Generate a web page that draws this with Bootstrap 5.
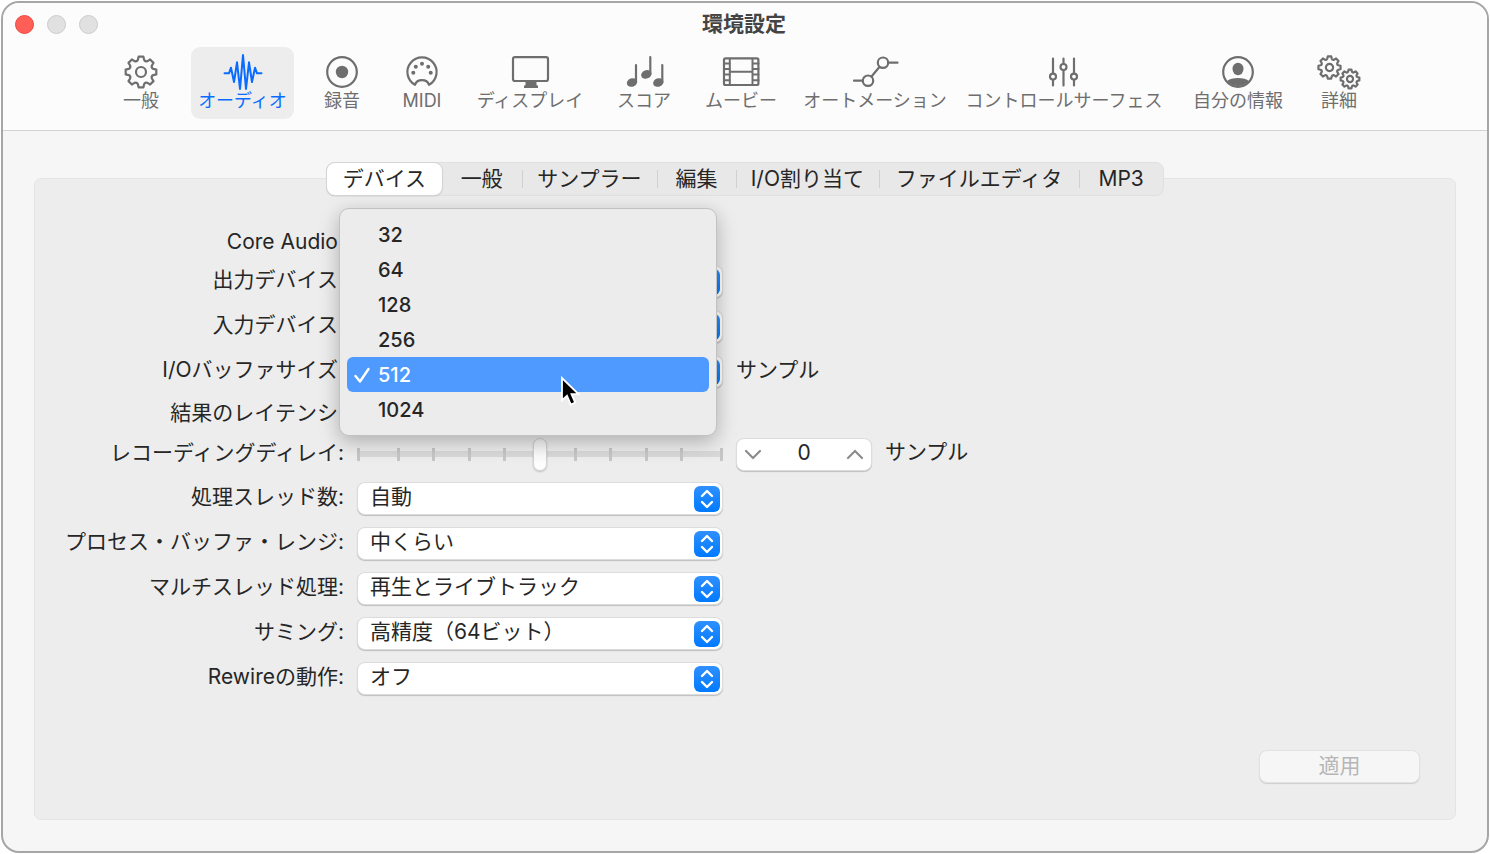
<!DOCTYPE html>
<html lang="ja">
<head>
<meta charset="utf-8">
<meta name="viewport" content="width=device-width, initial-scale=1">
<title>環境設定</title>
<link href="https://cdn.jsdelivr.net/npm/bootstrap@5.3.0/dist/css/bootstrap.min.css" rel="stylesheet">
<style>
  :root { --ink: #262626; --soft: #6e6e6e; --accent: #0a6cff; --line: #a6a6a6; }
  body { font-family: Inter, "Noto Sans CJK JP", sans-serif; font-size: 21px; line-height: 24px; color: var(--ink); background: #fff; padding: 1px; }
  .prefs-window { border: 2px solid var(--line); border-radius: 18px; background: #f6f6f6; overflow: hidden; }
  .prefs-head { background: #fcfcfc; border-bottom: 1px solid #d2d2d2; padding-bottom: 11px; }
  .title-row { height: 44px; padding: 0 14px 2px 12px; }
  .title-row h1 { font-size: 21px; line-height: 24px; font-weight: 700; color: #444; }
  .light { width: 19px; height: 19px; border-radius: 50%; border: 1px solid #cbcbcb; background: #e1e1e1; padding: 0; }
  .light-close { background: #ff5f57; border-color: #e9483f; }
  .tool-grid { display: grid; padding: 0 107px 0 88px;
    grid-template-columns: 100fr 103fr 96fr 64fr 152fr 76fr 118fr 150fr 228fr 120fr 82fr; }
  .tool { border: 0; background: none; border-radius: 9px; color: var(--soft); font-size: 18px; line-height: 22px; padding: 7px 0; white-space: nowrap; min-width: 0; }
  .tool svg { display: block; margin: 0 auto; width: 48px; height: 36px; overflow: visible; }
  .tool.active { background: #ededed; color: var(--accent); }
  .ico { fill: none; stroke: currentColor; stroke-width: 2.2; stroke-linecap: round; stroke-linejoin: round; }
  .ico .solid { fill: currentColor; stroke: none; }

  .prefs-body { padding: 31px 31px 31px 31px; }
  .seg { display: grid; grid-template-columns: 115fr 80fr 136fr 79fr 143fr 201fr 84fr; width: 100%; max-width: 838px; height: 34px;
    background: #e8e8e8; border: 1px solid #e0e0e0; border-radius: 8px; position: relative; z-index: 1; margin-bottom: -18px; }
  .seg button { border: 0; background: none; padding: 0; color: var(--ink); white-space: nowrap; position: relative; line-height: 30px; }
  .seg button + button + button::before { content: ""; position: absolute; left: 0; top: 7px; height: 18px; width: 1px; background: #d0d0d0; }
  .seg .active { background: #fff; border-radius: 8px; box-shadow: 0 0 0 1px #d4d4d4, 0 1px 2px #0003; }
  .panel { background: #ededed; border: 1px solid #e4e4e4; border-radius: 7px; padding: 46px 35px 36px 0; }

  .form-grid { display: grid; grid-template-columns: 309px 366px auto; column-gap: 13px; grid-auto-rows: 45px; grid-template-rows: 34px 45px 45px 45px 38px 44px; align-items: center; justify-content: start; }
  .form-grid > label, .form-grid > .caption { text-align: right; white-space: nowrap; }
  .form-grid > label { padding-bottom: 3px; }
  .form-grid > .unit { padding-bottom: 3px; }
  .popup { height: 33px; font-size: inherit; color: var(--ink); border: 1px solid #dcdcdc; border-radius: 8px; padding: 0 40px 3px 12px; line-height: 28px;
    box-shadow: 0 1px 1px #0003; background-color: #fff; background-size: 26px 26px; background-position: right 2px center; background-repeat: no-repeat;
    background-image: url("data:image/svg+xml,%3Csvg xmlns='http://www.w3.org/2000/svg' viewBox='0 0 26 26'%3E%3Cdefs%3E%3ClinearGradient id='g' x2='0' y2='1'%3E%3Cstop stop-color='%232f90ff'/%3E%3Cstop offset='1' stop-color='%23007aff'/%3E%3C/linearGradient%3E%3C/defs%3E%3Crect width='26' height='26' rx='6' fill='url(%23g)'/%3E%3Cpath d='M8 10l5-5 5 5M8 16l5 5 5-5' fill='none' stroke='%23fff' stroke-width='2.4' stroke-linecap='round' stroke-linejoin='round'/%3E%3C/svg%3E"); }

  .menu-sheet { display: block; left: -18px; top: -147px; width: 378px; padding: 8px 7px; background: #ececec; border: 1px solid #c2c2c2; border-radius: 10px; box-shadow: 0 6px 20px #0004; font-size: 20px; }
  .menu-sheet .dropdown-item { height: 35px; padding: 0 0 0 31px; border-radius: 6px; color: var(--ink); font-weight: 500; position: relative; line-height: 37px; }
  .menu-sheet .dropdown-item.active { background: #4e9aff; color: #fff; }
  .tick-mark { position: absolute; left: 7px; top: 9px; }
  .pointer { position: absolute; left: 220px; top: 167px; z-index: 2; }

  .slider { position: relative; height: 33px; display: flex; align-items: center; }
  .scale { flex: 1; height: 13px; border: solid #c6c6c6; border-width: 0 3px; padding: 0 37px; background: linear-gradient(#d9d9d9, #d9d9d9) center / 100% 6px no-repeat; }
  .scale i { width: 3px; background: #c6c6c6; }
  .scale i:nth-child(5) { background: none; }
  .slider input { position: absolute; inset: 0; width: 100%; margin: 0; appearance: none; background: none; }
  .slider input::-webkit-slider-thumb { appearance: none; width: 14px; height: 33px; border-radius: 7px; background: linear-gradient(#f4f4f4, #fff); border: 1px solid #d2d2d2; box-shadow: 0 1px 2px #0003; }
  .slider input::-moz-range-thumb { width: 14px; height: 33px; border-radius: 7px; background: #fff; border: 1px solid #d2d2d2; }
  .stepper { width: 136px; height: 33px; background: #fff; border: 1px solid #dcdcdc; border-radius: 8px; box-shadow: 0 1px 1px #0003; }
  .stepper button { width: 32px; border: 0; background: none; padding: 0; line-height: 0; color: #8c8c8c; }
  .stepper input { flex: 1; min-width: 0; border: 0; background: none; text-align: center; padding: 0 0 2px; color: var(--ink); }
  .apply { width: 161px; height: 33px; border-radius: 8px; border: 1px solid #e2e2e2; background: #f6f6f6; box-shadow: 0 1px 1px #0002; color: #b6b6b6; padding: 0 0 2px; line-height: 28px; }
</style>
</head>
<body class="d-flex flex-column min-vh-100">
<svg width="0" height="0" class="position-absolute" aria-hidden="true">
  <symbol id="gear" viewBox="-18 -18 36 36" overflow="visible">
    <path vector-effect="non-scaling-stroke" d="M-2.4-15.3L2.4-15.3 3.1-12.3Q4.1-10 6.5-10.9L9.1-12.5 12.5-9.1 10.9-6.5Q10-4.1 12.3-3.1L15.3-2.4 15.3 2.4 12.3 3.1Q10 4.1 10.9 6.5L12.5 9.1 9.1 12.5 6.5 10.9Q4.1 10 3.1 12.3L2.4 15.3-2.4 15.3-3.1 12.3Q-4.1 10-6.5 10.9L-9.1 12.5-12.5 9.1-10.9 6.5Q-10 4.1-12.3 3.1L-15.3 2.4-15.3-2.4-12.3-3.1Q-10-4.1-10.9-6.5L-12.5-9.1-9.1-12.5-6.5-10.9Q-4.1-10-3.1-12.3Z"/>
    <circle r="5" vector-effect="non-scaling-stroke"/>
  </symbol>
</svg>
<main class="prefs-window flex-grow-1 d-flex flex-column">
  <header class="prefs-head">
    <div class="title-row d-flex align-items-center">
      <div class="d-flex flex-fill w-50" style="gap:13px">
        <button class="light light-close" aria-label="閉じる"></button>
        <button class="light" aria-label="しまう"></button>
        <button class="light" aria-label="拡大"></button>
      </div>
      <h1 class="m-0 text-nowrap">環境設定</h1>
      <div class="flex-fill w-50"></div>
    </div>
    <nav class="tool-grid">
      <button class="tool"><svg class="ico" viewBox="-24 -18 48 36"><use href="#gear" x="-18" y="-18" width="36" height="36"/></svg>一般</button>
      <button class="tool active"><svg class="ico" viewBox="-24 -18 48 36"><path stroke-width="2" d="M-18.5 1.3H-14L-12-4.3-9 10-6-9.7-3 17 0-17 3 17 6-9.7 9 10 12-4.3 14 1.3H18.5"/></svg>オーディオ</button>
      <button class="tool"><svg class="ico" viewBox="-24 -18 48 36"><circle r="14.8"/><circle r="6.2" class="solid"/></svg>録音</button>
      <button class="tool"><svg class="ico" viewBox="-24 -18 48 36"><path d="M-7 12.8A14.6 14.6 0 1 1 7 12.8C5 6.6-5 6.6-7 12.8Z"/><g class="solid"><circle cx="-8.7" cy=".7" r="2"/><circle cx="-6.2" cy="-5.3" r="2"/><circle cy="-8.2" r="2"/><circle cx="6.2" cy="-5.3" r="2"/><circle cx="8.7" cy=".7" r="2"/></g></svg>MIDI</button>
      <button class="tool"><svg class="ico" viewBox="-24 -18 48 36"><rect x="-17" y="-14.8" width="35" height="23.8" rx="2"/><path class="solid" d="M-4.5 9.5h11V13l1.5.8v2.2h-14v-2.2l1.5-.8z"/></svg>ディスプレイ</button>
      <button class="tool"><svg class="ico" viewBox="-24 -18 48 36"><path d="M-8-7V10M6.3-15V2M18.3-7V10"/><g class="solid"><ellipse cx="-12" cy="10.5" rx="5.3" ry="4.2" transform="rotate(-20 -12 10.5)"/><ellipse cx="2.3" cy="2.4" rx="5.3" ry="4.2" transform="rotate(-20 2.3 2.4)"/><ellipse cx="14.3" cy="10.5" rx="5.3" ry="4.2" transform="rotate(-20 14.3 10.5)"/></g></svg>スコア</button>
      <button class="tool"><svg class="ico" viewBox="-24 -18 48 36"><rect x="-17" y="-13.6" width="34.4" height="26.6" rx="1.5"/><path stroke-width="2" d="M-11.2-13V13M11.5-13V13M-11-.3H11M-17-8.6h6M-17-3h6M-17 2.6h6M-17 8.2h6M11.5-8.6h6M11.5-3h6M11.5 2.6h6M11.5 8.2h6"/></svg>ムービー</button>
      <button class="tool"><svg class="ico" viewBox="-24 -18 48 36"><circle cx="-7" cy="8.7" r="5.2"/><circle cx="8" cy="-9.3" r="5.2"/><path d="M-21 8.7h8.5M-3.7 4.7L4.6-5.2M13.5-9.3H22.5"/></svg>オートメーション</button>
      <button class="tool"><svg class="ico" viewBox="-24 -18 48 36"><path d="M-11-13.5V1.5M-11 8V13.5M-.5-13.5V-8.5M-.5-2V13.5M10-13.5V1.5M10 8V13.5"/><circle cx="-11" cy="4.6" r="3"/><circle cx="-.5" cy="-5" r="3"/><circle cx="10" cy="4.6" r="3"/></svg>コントロールサーフェス</button>
      <button class="tool"><svg class="ico" viewBox="-24 -18 48 36"><circle r="14.8"/><ellipse class="solid" cy="-3" rx="5.5" ry="6.2"/><path class="solid" d="M-11 9C-7 5 7 5 11 9A14.5 14.5 0 0 1-11 9Z"/></svg>自分の情報</button>
      <button class="tool"><svg class="ico" viewBox="-24 -18 48 36"><use href="#gear" x="-22.5" y="-17.5" width="26" height="26"/><use href="#gear" x="0" y="-4" width="22" height="22"/></svg>詳細</button>
    </nav>
  </header>

  <div class="prefs-body flex-grow-1 d-flex flex-column">
    <div class="seg mx-auto" role="tablist">
      <button class="active" role="tab" aria-selected="true">デバイス</button>
      <button role="tab">一般</button>
      <button role="tab">サンプラー</button>
      <button role="tab">編集</button>
      <button role="tab">I/O割り当て</button>
      <button role="tab">ファイルエディタ</button>
      <button role="tab">MP3</button>
    </div>
    <form class="panel flex-grow-1 d-flex flex-column" onsubmit="return false">
      <div class="form-grid">
        <span class="caption">Core Audio:</span><span></span><span></span>

        <label for="out">出力デバイス:</label>
        <select id="out" class="form-select popup"><option></option></select><span></span>

        <label for="in">入力デバイス:</label>
        <select id="in" class="form-select popup"><option></option></select><span></span>

        <label for="buf">I/Oバッファサイズ:</label>
        <div class="position-relative">
          <select id="buf" class="form-select popup"><option></option></select>
          <div class="dropdown-menu menu-sheet show">
            <button type="button" class="dropdown-item">32</button>
            <button type="button" class="dropdown-item">64</button>
            <button type="button" class="dropdown-item">128</button>
            <button type="button" class="dropdown-item">256</button>
            <button type="button" class="dropdown-item active"><svg class="tick-mark" width="17" height="18" viewBox="0 0 17 18"><path d="M1.5 10L6 15.5 14.5 3" fill="none" stroke="currentColor" stroke-width="2.4" stroke-linecap="round" stroke-linejoin="round"/></svg>512</button>
            <button type="button" class="dropdown-item">1024</button>
            <svg class="pointer" width="21" height="30" viewBox="-2 -2 21 30" aria-hidden="true"><path d="M0 0V22.5L5 17.8 8.8 26.5 13.2 24.6 9.5 16.2H16.5Z" fill="#000" stroke="#fff" stroke-width="1.8"/></svg>
          </div>
        </div>
        <span class="unit">サンプル</span>

        <span class="caption">結果のレイテンシ:</span><span></span><span></span>

        <label for="delay">レコーディングディレイ:</label>
        <div class="slider">
          <div class="scale d-flex justify-content-between"><i></i><i></i><i></i><i></i><i></i><i></i><i></i><i></i><i></i></div>
          <input id="delay" type="range" min="-5000" max="5000" value="0">
        </div>
        <div class="d-flex align-items-center" style="gap:13px">
          <div class="stepper d-flex align-items-stretch">
            <button type="button" aria-label="減らす"><svg width="18" height="12" viewBox="0 0 18 12"><path d="M2 3l7 7 7-7" fill="none" stroke="currentColor" stroke-width="2.2" stroke-linecap="round"/></svg></button>
            <input type="text" value="0" aria-label="レコーディングディレイの値">
            <button type="button" aria-label="増やす"><svg width="18" height="12" viewBox="0 0 18 12"><path d="M2 10l7-7 7 7" fill="none" stroke="currentColor" stroke-width="2.2" stroke-linecap="round"/></svg></button>
          </div>
          <span class="pb-1">サンプル</span>
        </div>

        <label for="threads">処理スレッド数:</label>
        <select id="threads" class="form-select popup"><option>自動</option></select><span></span>
        <label for="range">プロセス・バッファ・レンジ:</label>
        <select id="range" class="form-select popup"><option>中くらい</option></select><span></span>
        <label for="multi">マルチスレッド処理:</label>
        <select id="multi" class="form-select popup"><option>再生とライブトラック</option></select><span></span>
        <label for="sum">サミング:</label>
        <select id="sum" class="form-select popup"><option>高精度（64ビット）</option></select><span></span>
        <label for="rewire">Rewireの動作:</label>
        <select id="rewire" class="form-select popup"><option>オフ</option></select><span></span>
      </div>
      <button type="submit" class="apply mt-auto ms-auto" disabled>適用</button>
    </form>
  </div>
</main>
<script src="https://cdn.jsdelivr.net/npm/bootstrap@5.3.0/dist/js/bootstrap.bundle.min.js"></script>
</body>
</html>
